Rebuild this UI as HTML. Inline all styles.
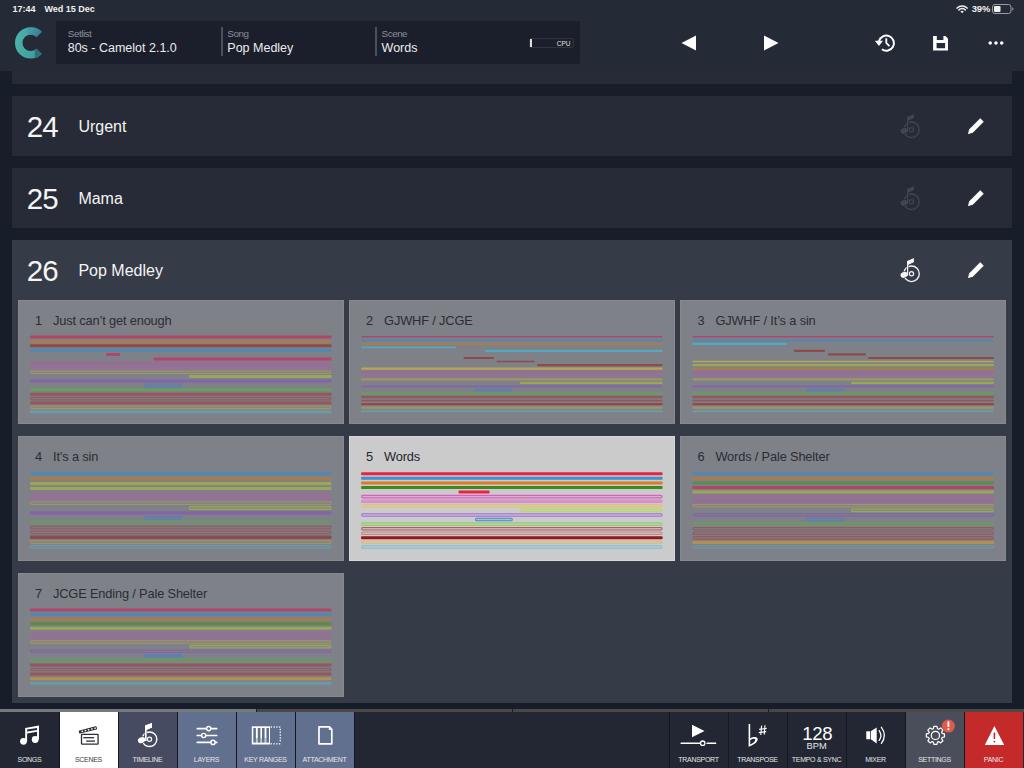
<!DOCTYPE html>
<html><head><meta charset="utf-8"><style>
html,body{margin:0;padding:0;}
body{width:1024px;height:768px;overflow:hidden;position:relative;background:#252a37;font-family:"Liberation Sans", sans-serif;}
.t{position:absolute;white-space:nowrap;}
.r{position:absolute;}
svg.r{overflow:visible;}
</style></head><body>
<div class="t" style="left:12.5px;top:4.68px;font-size:9px;line-height:9px;color:#f0f0f0;font-weight:bold;">17:44</div>
<div class="t" style="left:44.5px;top:4.68px;font-size:9px;line-height:9px;color:#f0f0f0;font-weight:bold;">Wed 15 Dec</div>
<div class="t" style="right:33.60000000000002px;text-align:right;top:4.34px;font-size:9.4px;line-height:9.4px;color:#f0f0f0;font-weight:600;">39%</div>
<svg class="r" style="left:10px;top:22px" width="40" height="40" viewBox="10 22 40 40">
<defs><linearGradient id="lg" x1="0" y1="0" x2="1" y2="0.3"><stop offset="0" stop-color="#4db2ad"/><stop offset="1" stop-color="#3f9d9d"/></linearGradient>
<linearGradient id="lg2" x1="0" y1="0" x2="1" y2="0.6"><stop offset="0" stop-color="#3d8fa0" stop-opacity="0"/><stop offset="1" stop-color="#3a7895"/></linearGradient></defs>
<path d="M41.8 31.8 A15.7 15.7 0 1 0 41.8 54.0 L36.5 48.7 A8.2 8.2 0 1 1 36.5 37.1 Z" fill="url(#lg)"/>
<path d="M41.8 31.8 A15.7 15.7 0 0 0 26 27.5 L28.5 35 A8.2 8.2 0 0 1 36.5 37.1 Z" fill="url(#lg2)"/>
<path d="M41.8 54.0 A15.7 15.7 0 0 1 34.7 58.2 L34.9 50.2 A8.2 8.2 0 0 0 36.5 48.7 Z" fill="#2f7272"/>
</svg>
<div class="r" style="left:56px;top:21px;width:524px;height:43.3px;background:#1b1f2c;border-radius:2px"></div>
<div class="t" style="left:67.8px;top:29.10px;font-size:9.8px;line-height:9.8px;color:#8a8e99;font-weight:normal;letter-spacing:-0.45px">Setlist</div>
<div class="t" style="left:67.7px;top:42.02px;font-size:12.5px;line-height:12.5px;color:#ececec;font-weight:normal;">80s - Camelot 2.1.0</div>
<div class="r" style="left:221px;top:27px;width:1.5px;height:28.5px;background:#4c505c;"></div>
<div class="t" style="left:227.3px;top:29.10px;font-size:9.8px;line-height:9.8px;color:#8a8e99;font-weight:normal;letter-spacing:-0.45px">Song</div>
<div class="t" style="left:227.3px;top:42.02px;font-size:12.5px;line-height:12.5px;color:#ececec;font-weight:normal;">Pop Medley</div>
<div class="r" style="left:375.2px;top:27px;width:1.5px;height:28.5px;background:#4c505c;"></div>
<div class="t" style="left:381.6px;top:29.10px;font-size:9.8px;line-height:9.8px;color:#8a8e99;font-weight:normal;letter-spacing:-0.45px">Scene</div>
<div class="t" style="left:381.6px;top:42.02px;font-size:12.5px;line-height:12.5px;color:#ececec;font-weight:normal;">Words</div>
<div class="r" style="left:529.4px;top:37.9px;width:44.5px;height:10px;background:transparent;box-sizing:border-box;border:1px solid #30343f;border-radius:2px"></div>
<div class="r" style="left:530.2px;top:38.9px;width:2px;height:8.1px;background:#dcdcdc;"></div>
<div class="t" style="right:453.5px;text-align:right;top:40.50px;font-size:6.5px;line-height:6.5px;color:#e0e0e0;font-weight:normal;">CPU</div>
<svg class="r" style="left:681px;top:35px" width="16" height="16" viewBox="0 0 16 16"><path d="M15 0.6 L15 15.4 L0.5 8 Z" fill="#fff"/></svg>
<svg class="r" style="left:763px;top:35px" width="16" height="16" viewBox="0 0 16 16"><path d="M1 0.6 L1 15.4 L15.5 8 Z" fill="#fff"/></svg>
<svg class="r" style="left:870px;top:28px" width="30" height="30" viewBox="870 28 30 30">
<path d="M879 41.1 A7.6 7.6 0 1 1 881.9 49.3" fill="none" stroke="#fff" stroke-width="2"/>
<path d="M874.9 40.8 L883 40.8 L878.95 45.9 Z" fill="#fff"/>
<path d="M886.3 38.3 L886.3 43 L889.4 46.1" fill="none" stroke="#fff" stroke-width="1.8"/>
</svg>
<svg class="r" style="left:930px;top:33px" width="20" height="20" viewBox="930 33 20 20">
<path d="M933.1 35.9 L936.8 35.9 L936.8 40 L943.4 40 L943.4 35.9 L945.4 35.9 L948 38.5 L948 50.4 L933.1 50.4 Z M936.6 43 L945.1 43 L945.1 48.3 L936.6 48.3 Z" fill="#fff" fill-rule="evenodd"/>
</svg>
<svg class="r" style="left:980px;top:32px" width="32" height="20" viewBox="980 32 32 20"><circle cx="990.2" cy="42.9" r="1.75" fill="#fff"/><circle cx="995.95" cy="42.9" r="1.75" fill="#fff"/><circle cx="1001.7" cy="42.9" r="1.75" fill="#fff"/></svg>
<svg class="r" style="left:954px;top:3px" width="16" height="12" viewBox="954 3 16 12">
<path d="M957.1 8.1 A7 7 0 0 1 967.1 8.1" fill="none" stroke="#f0f0f0" stroke-width="1.5" stroke-linecap="round"/>
<path d="M958.9 9.9 A4.5 4.5 0 0 1 965.3 9.9" fill="none" stroke="#f0f0f0" stroke-width="1.5" stroke-linecap="round"/>
<path d="M962.1 13.2 L960.4 11.5 A2.4 2.4 0 0 1 963.8 11.5 Z" fill="#f0f0f0"/>
</svg>
<svg class="r" style="left:992px;top:4px" width="22" height="10" viewBox="0 0 22 10">
<rect x="0.5" y="0.5" width="18.5" height="9" rx="2.5" fill="none" stroke="#9a9ca2" stroke-width="1"/>
<rect x="2" y="2" width="6.5" height="6" rx="1" fill="#f0f0f0"/>
<path d="M20.3 3.3 A1.8 1.8 0 0 1 20.3 6.7 Z" fill="#9a9ca2"/>
</svg>
<div class="r" style="left:0px;top:71px;width:1024px;height:641px;background:#181d2a;"></div>
<div class="r" style="left:12px;top:71px;width:1000px;height:13px;background:#262b37;"></div>
<div class="r" style="left:12px;top:96px;width:1000px;height:60px;background:#262b37;"></div>
<div class="t" style="left:26.8px;top:112.03px;font-size:29.5px;line-height:29.5px;color:#f4f4f4;font-weight:normal;letter-spacing:-1px">24</div>
<div class="t" style="left:78.4px;top:118.76px;font-size:16px;line-height:16px;color:#f4f4f4;font-weight:normal;">Urgent</div>
<div class="r" style="left:12px;top:168px;width:1000px;height:60px;background:#262b37;"></div>
<div class="t" style="left:26.8px;top:184.03px;font-size:29.5px;line-height:29.5px;color:#f4f4f4;font-weight:normal;letter-spacing:-1px">25</div>
<div class="t" style="left:78.4px;top:190.76px;font-size:16px;line-height:16px;color:#f4f4f4;font-weight:normal;">Mama</div>
<div class="r" style="left:12px;top:240px;width:1000px;height:463px;background:#363b48;"></div>
<div class="t" style="left:26.8px;top:256.03px;font-size:29.5px;line-height:29.5px;color:#f4f4f4;font-weight:normal;letter-spacing:-1px">26</div>
<div class="t" style="left:78.4px;top:262.76px;font-size:16px;line-height:16px;color:#f4f4f4;font-weight:normal;">Pop Medley</div>
<svg class="r" style="left:895px;top:111px" width="30" height="30" viewBox="895 15 30 30">
<circle cx="911.5" cy="33.8" r="7.8" fill="none" stroke="#40454f" stroke-width="1.3"/>
<circle cx="911.5" cy="33.8" r="2.1" fill="none" stroke="#40454f" stroke-width="1.2"/>
<path d="M907 35.5 L907 21.3 L913.8 18.2 L913.8 22 L908.1 24.8 L908.1 35.5 Z" fill="#40454f" stroke="#262b37" stroke-width="0.8" paint-order="stroke"/>
<ellipse cx="904.1" cy="34.8" rx="3.7" ry="2.8" transform="rotate(-25 904.1 34.8)" fill="#40454f" stroke="#262b37" stroke-width="1" paint-order="stroke"/>
<path d="M907 35.5 L907 21.3 L913.8 18.2 L913.8 22 L908.1 24.8 L908.1 35.5 Z" fill="#40454f"/>
</svg>
<svg class="r" style="left:960px;top:106px" width="30" height="30" viewBox="960 10 30 30">
<path d="M980.2 22.6 L983.4 25.8 L972.8 36.4 L968.3 37.7 L969.6 33.2 Z" fill="#fff" stroke="#fff" stroke-width="0.6" stroke-linejoin="round"/>
</svg>
<svg class="r" style="left:895px;top:183px" width="30" height="30" viewBox="895 15 30 30">
<circle cx="911.5" cy="33.8" r="7.8" fill="none" stroke="#40454f" stroke-width="1.3"/>
<circle cx="911.5" cy="33.8" r="2.1" fill="none" stroke="#40454f" stroke-width="1.2"/>
<path d="M907 35.5 L907 21.3 L913.8 18.2 L913.8 22 L908.1 24.8 L908.1 35.5 Z" fill="#40454f" stroke="#262b37" stroke-width="0.8" paint-order="stroke"/>
<ellipse cx="904.1" cy="34.8" rx="3.7" ry="2.8" transform="rotate(-25 904.1 34.8)" fill="#40454f" stroke="#262b37" stroke-width="1" paint-order="stroke"/>
<path d="M907 35.5 L907 21.3 L913.8 18.2 L913.8 22 L908.1 24.8 L908.1 35.5 Z" fill="#40454f"/>
</svg>
<svg class="r" style="left:960px;top:178px" width="30" height="30" viewBox="960 10 30 30">
<path d="M980.2 22.6 L983.4 25.8 L972.8 36.4 L968.3 37.7 L969.6 33.2 Z" fill="#fff" stroke="#fff" stroke-width="0.6" stroke-linejoin="round"/>
</svg>
<svg class="r" style="left:895px;top:255px" width="30" height="30" viewBox="895 15 30 30">
<circle cx="911.5" cy="33.8" r="7.8" fill="none" stroke="#f4f4f4" stroke-width="1.3"/>
<circle cx="911.5" cy="33.8" r="2.1" fill="none" stroke="#f4f4f4" stroke-width="1.2"/>
<path d="M907 35.5 L907 21.3 L913.8 18.2 L913.8 22 L908.1 24.8 L908.1 35.5 Z" fill="#f4f4f4" stroke="#363b48" stroke-width="0.8" paint-order="stroke"/>
<ellipse cx="904.1" cy="34.8" rx="3.7" ry="2.8" transform="rotate(-25 904.1 34.8)" fill="#f4f4f4" stroke="#363b48" stroke-width="1" paint-order="stroke"/>
<path d="M907 35.5 L907 21.3 L913.8 18.2 L913.8 22 L908.1 24.8 L908.1 35.5 Z" fill="#f4f4f4"/>
</svg>
<svg class="r" style="left:960px;top:250px" width="30" height="30" viewBox="960 10 30 30">
<path d="M980.2 22.6 L983.4 25.8 L972.8 36.4 L968.3 37.7 L969.6 33.2 Z" fill="#fff" stroke="#fff" stroke-width="0.6" stroke-linejoin="round"/>
</svg>
<div class="r" style="left:18px;top:299.9px;width:325.5px;height:124.6px;background:#7e8187;box-shadow:inset 0 0 0 1px rgba(255,255,255,0.07)"></div>
<div class="t" style="left:35px;top:314.96px;font-size:12.8px;line-height:12.8px;color:#2a2d36;font-weight:normal;">1</div>
<div class="t" style="left:53px;top:314.96px;font-size:12.8px;line-height:12.8px;color:#2a2d36;font-weight:normal;letter-spacing:-0.15px">Just can’t get enough</div>
<div class="r" style="left:349.1px;top:299.9px;width:325.5px;height:124.6px;background:#7e8187;box-shadow:inset 0 0 0 1px rgba(255,255,255,0.07)"></div>
<div class="t" style="left:366.1px;top:314.96px;font-size:12.8px;line-height:12.8px;color:#2a2d36;font-weight:normal;">2</div>
<div class="t" style="left:384.1px;top:314.96px;font-size:12.8px;line-height:12.8px;color:#2a2d36;font-weight:normal;letter-spacing:-0.15px">GJWHF / JCGE</div>
<div class="r" style="left:680.4px;top:299.9px;width:325.5px;height:124.6px;background:#7e8187;box-shadow:inset 0 0 0 1px rgba(255,255,255,0.07)"></div>
<div class="t" style="left:697.4px;top:314.96px;font-size:12.8px;line-height:12.8px;color:#2a2d36;font-weight:normal;">3</div>
<div class="t" style="left:715.4px;top:314.96px;font-size:12.8px;line-height:12.8px;color:#2a2d36;font-weight:normal;letter-spacing:-0.15px">GJWHF / It’s a sin</div>
<div class="r" style="left:18px;top:436px;width:325.5px;height:124.6px;background:#7e8187;box-shadow:inset 0 0 0 1px rgba(255,255,255,0.07)"></div>
<div class="t" style="left:35px;top:451.06px;font-size:12.8px;line-height:12.8px;color:#2a2d36;font-weight:normal;">4</div>
<div class="t" style="left:53px;top:451.06px;font-size:12.8px;line-height:12.8px;color:#2a2d36;font-weight:normal;letter-spacing:-0.15px">It’s a sin</div>
<div class="r" style="left:349.1px;top:436px;width:325.5px;height:124.6px;background:#cbcbcb;box-shadow:inset 0 0 0 1px rgba(255,255,255,0.25)"></div>
<div class="t" style="left:366.1px;top:451.06px;font-size:12.8px;line-height:12.8px;color:#22252e;font-weight:normal;">5</div>
<div class="t" style="left:384.1px;top:451.06px;font-size:12.8px;line-height:12.8px;color:#22252e;font-weight:normal;letter-spacing:-0.15px">Words</div>
<div class="r" style="left:680.4px;top:436px;width:325.5px;height:124.6px;background:#7e8187;box-shadow:inset 0 0 0 1px rgba(255,255,255,0.07)"></div>
<div class="t" style="left:697.4px;top:451.06px;font-size:12.8px;line-height:12.8px;color:#2a2d36;font-weight:normal;">6</div>
<div class="t" style="left:715.4px;top:451.06px;font-size:12.8px;line-height:12.8px;color:#2a2d36;font-weight:normal;letter-spacing:-0.15px">Words / Pale Shelter</div>
<div class="r" style="left:18px;top:572.6px;width:325.5px;height:124.6px;background:#7e8187;box-shadow:inset 0 0 0 1px rgba(255,255,255,0.07)"></div>
<div class="t" style="left:35px;top:587.66px;font-size:12.8px;line-height:12.8px;color:#2a2d36;font-weight:normal;">7</div>
<div class="t" style="left:53px;top:587.66px;font-size:12.8px;line-height:12.8px;color:#2a2d36;font-weight:normal;letter-spacing:-0.15px">JCGE Ending / Pale Shelter</div>
<svg class="r" style="left:0px;top:0px" width="1024" height="768" viewBox="0 0 1024 768"><rect x="30.00" y="335.50" width="301.50" height="3.00" rx="0.8" fill="#b0476a"/><rect x="30.00" y="339.90" width="301.50" height="3.00" rx="0.8" fill="#a97c50"/><rect x="30.00" y="344.30" width="301.50" height="3.00" rx="0.8" fill="#8e4b4b"/><rect x="30.00" y="348.70" width="301.50" height="3.00" rx="0.8" fill="#4f89b3"/><rect x="106.00" y="353.10" width="14.00" height="3.00" rx="0.8" fill="#b0476a"/><rect x="153.60" y="357.50" width="177.90" height="3.00" rx="0.8" fill="#b0476a"/><rect x="30.55" y="362.15" width="300.40" height="2.50" rx="1.1" fill="#9b6b97c0" stroke="#9b6b97" stroke-width="1.1"/><rect x="30.55" y="366.55" width="300.40" height="2.50" rx="1.1" fill="#a06a9e38" stroke="#a06a9e" stroke-width="1.1"/><rect x="30.55" y="370.95" width="300.40" height="2.50" rx="1.1" fill="#a0946838" stroke="#a09468" stroke-width="1.1"/><rect x="188.80" y="375.10" width="142.70" height="3.00" rx="0.8" fill="#98a856"/><rect x="30.00" y="379.50" width="301.50" height="3.00" rx="0.8" fill="#8563aa"/><rect x="144.55" y="384.15" width="36.90" height="2.50" rx="1.1" fill="#5b7fb338" stroke="#5b7fb3" stroke-width="1.1"/><rect x="30.00" y="388.30" width="301.50" height="3.00" rx="0.8" fill="#6a9b60"/><rect x="30.00" y="392.70" width="301.50" height="3.00" rx="0.8" fill="#94575f"/><rect x="30.55" y="397.35" width="300.40" height="2.50" rx="1.1" fill="#945a6238" stroke="#945a62" stroke-width="1.1"/><rect x="30.00" y="401.50" width="301.50" height="3.00" rx="0.8" fill="#94575f"/><rect x="30.55" y="406.15" width="300.40" height="2.50" rx="1.1" fill="#a0946838" stroke="#a09468" stroke-width="1.1"/><rect x="30.00" y="410.30" width="301.50" height="3.00" rx="0.8" fill="#6b9aa8"/><rect x="361.10" y="335.90" width="301.50" height="1.60" rx="0.8" fill="#b0476a"/><rect x="361.10" y="339.15" width="301.50" height="2.20" rx="0.8" fill="#4f89b3"/><rect x="361.10" y="342.70" width="301.50" height="2.20" rx="0.8" fill="#a97c50"/><rect x="361.10" y="346.55" width="94.90" height="1.60" rx="0.8" fill="#55a9ba"/><rect x="485.00" y="349.80" width="177.60" height="2.20" rx="0.8" fill="#55a9ba"/><rect x="463.40" y="356.90" width="30.60" height="2.20" rx="0.8" fill="#8e4b4b"/><rect x="496.50" y="360.75" width="38.20" height="1.60" rx="0.8" fill="#8e4b4b"/><rect x="537.00" y="364.00" width="125.60" height="2.20" rx="0.8" fill="#8e4b4b"/><rect x="361.10" y="367.55" width="301.50" height="2.20" rx="0.8" fill="#b6a756"/><rect x="361.10" y="370.90" width="301.50" height="2.60" rx="0.8" fill="#9b6b97"/><rect x="361.10" y="374.95" width="301.50" height="1.60" rx="0.8" fill="#a06a9e"/><rect x="361.10" y="378.20" width="301.50" height="2.20" rx="0.8" fill="#a09468"/><rect x="520.00" y="381.75" width="142.60" height="2.20" rx="0.8" fill="#98a856"/><rect x="361.10" y="385.60" width="301.50" height="1.60" rx="0.8" fill="#8563aa"/><rect x="475.55" y="389.10" width="36.90" height="1.70" rx="1.1" fill="#5b7fb338" stroke="#5b7fb3" stroke-width="1.1"/><rect x="361.10" y="392.20" width="301.50" height="2.60" rx="0.8" fill="#6a9b60"/><rect x="361.10" y="395.75" width="301.50" height="2.60" rx="0.8" fill="#94575f"/><rect x="361.10" y="399.80" width="301.50" height="1.60" rx="0.8" fill="#94575f"/><rect x="361.10" y="403.05" width="301.50" height="2.20" rx="0.8" fill="#8e4b4b"/><rect x="361.10" y="406.60" width="301.50" height="2.20" rx="0.8" fill="#a09468"/><rect x="361.10" y="410.15" width="301.50" height="2.20" rx="0.8" fill="#6b9aa8"/><rect x="692.40" y="335.90" width="301.50" height="1.60" rx="0.8" fill="#b0476a"/><rect x="692.40" y="339.15" width="301.50" height="2.20" rx="0.8" fill="#4f89b3"/><rect x="692.40" y="342.70" width="94.90" height="2.20" rx="0.8" fill="#55a9ba"/><rect x="794.00" y="349.80" width="31.00" height="2.20" rx="0.8" fill="#8e4b4b"/><rect x="828.00" y="353.35" width="38.00" height="2.20" rx="0.8" fill="#8e4b4b"/><rect x="868.00" y="356.90" width="125.90" height="2.20" rx="0.8" fill="#8e4b4b"/><rect x="692.40" y="360.75" width="301.50" height="1.60" rx="0.8" fill="#b6a756"/><rect x="692.40" y="364.00" width="301.50" height="2.20" rx="0.8" fill="#98a856"/><rect x="692.40" y="367.55" width="301.50" height="2.20" rx="0.8" fill="#a97c50"/><rect x="692.40" y="370.90" width="301.50" height="2.60" rx="0.8" fill="#9b6b97"/><rect x="692.40" y="374.65" width="301.50" height="2.20" rx="0.8" fill="#a06a9e"/><rect x="692.40" y="378.20" width="301.50" height="2.20" rx="0.8" fill="#a09468"/><rect x="851.00" y="381.75" width="142.90" height="2.20" rx="0.8" fill="#98a856"/><rect x="692.40" y="385.60" width="301.50" height="1.60" rx="0.8" fill="#8563aa"/><rect x="806.55" y="389.10" width="37.40" height="1.70" rx="1.1" fill="#5b7fb338" stroke="#5b7fb3" stroke-width="1.1"/><rect x="692.40" y="392.20" width="301.50" height="2.60" rx="0.8" fill="#6a9b60"/><rect x="692.40" y="395.75" width="301.50" height="2.60" rx="0.8" fill="#94575f"/><rect x="692.40" y="399.80" width="301.50" height="1.60" rx="0.8" fill="#94575f"/><rect x="692.40" y="403.05" width="301.50" height="2.20" rx="0.8" fill="#8e4b4b"/><rect x="692.40" y="406.60" width="301.50" height="2.20" rx="0.8" fill="#a09468"/><rect x="692.40" y="410.15" width="301.50" height="2.20" rx="0.8" fill="#6b9aa8"/><rect x="30.00" y="472.30" width="301.50" height="3.20" rx="0.8" fill="#4f89b3"/><rect x="30.00" y="477.07" width="301.50" height="3.40" rx="0.8" fill="#a97c50"/><rect x="30.00" y="482.04" width="301.50" height="3.20" rx="0.8" fill="#98a856"/><rect x="30.00" y="486.91" width="301.50" height="3.20" rx="0.8" fill="#98a856"/><rect x="30.55" y="492.03" width="300.40" height="2.70" rx="1.1" fill="#a06a9e38" stroke="#a06a9e" stroke-width="1.1"/><rect x="30.55" y="496.90" width="300.40" height="2.70" rx="1.1" fill="#a06a9e38" stroke="#a06a9e" stroke-width="1.1"/><rect x="30.55" y="501.77" width="300.40" height="2.70" rx="1.1" fill="#a0946838" stroke="#a09468" stroke-width="1.1"/><rect x="189.35" y="506.64" width="141.60" height="2.70" rx="1.1" fill="#98a85638" stroke="#98a856" stroke-width="1.1"/><rect x="30.00" y="511.26" width="301.50" height="3.20" rx="0.8" fill="#8563aa"/><rect x="144.75" y="516.38" width="36.70" height="2.70" rx="1.1" fill="#5b7fb338" stroke="#5b7fb3" stroke-width="1.1"/><rect x="30.55" y="521.25" width="300.40" height="2.70" rx="1.1" fill="#6a9b6038" stroke="#6a9b60" stroke-width="1.1"/><rect x="30.55" y="526.12" width="300.40" height="2.70" rx="1.1" fill="#945a6238" stroke="#945a62" stroke-width="1.1"/><rect x="30.55" y="530.99" width="300.40" height="2.70" rx="1.1" fill="#945a6238" stroke="#945a62" stroke-width="1.1"/><rect x="30.00" y="535.51" width="301.50" height="3.40" rx="0.8" fill="#8e4b4b"/><rect x="30.55" y="540.73" width="300.40" height="2.70" rx="1.1" fill="#a0946838" stroke="#a09468" stroke-width="1.1"/><rect x="30.55" y="545.60" width="300.40" height="2.70" rx="1.1" fill="#6b9aa838" stroke="#6b9aa8" stroke-width="1.1"/><rect x="361.10" y="472.25" width="301.50" height="3.00" rx="0.8" fill="#e9243f"/><rect x="361.10" y="476.83" width="301.50" height="3.00" rx="0.8" fill="#3e90d2"/><rect x="361.10" y="481.41" width="301.50" height="3.00" rx="0.8" fill="#e07a25"/><rect x="361.10" y="485.89" width="301.50" height="3.20" rx="0.8" fill="#3c8b22"/><rect x="458.60" y="490.57" width="30.90" height="3.00" rx="0.8" fill="#e9243f"/><rect x="361.65" y="495.40" width="300.40" height="2.50" rx="1.1" fill="#dd5dc230" stroke="#dd5dc2" stroke-width="1.1"/><rect x="361.65" y="499.98" width="300.40" height="2.50" rx="1.1" fill="#d98ac6d0" stroke="#d98ac6" stroke-width="1.1"/><rect x="361.65" y="504.56" width="300.40" height="2.50" rx="1.1" fill="#e2c56a30" stroke="#e2c56a" stroke-width="1.1"/><rect x="520.75" y="509.14" width="141.30" height="2.50" rx="1.1" fill="#bcd96630" stroke="#bcd966" stroke-width="1.1"/><rect x="361.65" y="513.72" width="300.40" height="2.50" rx="1.1" fill="#a56fdd30" stroke="#a56fdd" stroke-width="1.1"/><rect x="475.55" y="518.30" width="36.70" height="2.50" rx="1.1" fill="#4a86d030" stroke="#4a86d0" stroke-width="1.1"/><rect x="361.65" y="522.88" width="300.40" height="2.50" rx="1.1" fill="#90d17230" stroke="#90d172" stroke-width="1.1"/><rect x="361.65" y="527.46" width="300.40" height="2.50" rx="1.1" fill="#b65a5a30" stroke="#b65a5a" stroke-width="1.1"/><rect x="361.65" y="532.04" width="300.40" height="2.50" rx="1.1" fill="#c9858530" stroke="#c98585" stroke-width="1.1"/><rect x="361.10" y="536.37" width="301.50" height="3.00" rx="0.8" fill="#911a1a"/><rect x="361.65" y="541.20" width="300.40" height="2.50" rx="1.1" fill="#dfb77430" stroke="#dfb774" stroke-width="1.1"/><rect x="361.65" y="545.78" width="300.40" height="2.50" rx="1.1" fill="#74c3dc30" stroke="#74c3dc" stroke-width="1.1"/><rect x="692.40" y="472.25" width="301.50" height="3.00" rx="0.8" fill="#4f89b3"/><rect x="692.40" y="476.83" width="301.50" height="3.00" rx="0.8" fill="#a97c50"/><rect x="692.40" y="481.41" width="301.50" height="3.00" rx="0.8" fill="#5e8a4e"/><rect x="692.40" y="485.99" width="301.50" height="3.00" rx="0.8" fill="#b0476a"/><rect x="692.40" y="490.57" width="301.50" height="3.00" rx="0.8" fill="#98a856"/><rect x="692.95" y="495.40" width="300.40" height="2.50" rx="1.1" fill="#a06a9e38" stroke="#a06a9e" stroke-width="1.1"/><rect x="692.95" y="499.98" width="300.40" height="2.50" rx="1.1" fill="#9b6b97c0" stroke="#9b6b97" stroke-width="1.1"/><rect x="692.95" y="504.56" width="300.40" height="2.50" rx="1.1" fill="#a0946838" stroke="#a09468" stroke-width="1.1"/><rect x="851.55" y="509.14" width="141.80" height="2.50" rx="1.1" fill="#98a85638" stroke="#98a856" stroke-width="1.1"/><rect x="692.95" y="513.72" width="300.40" height="2.50" rx="1.1" fill="#8563aa38" stroke="#8563aa" stroke-width="1.1"/><rect x="806.80" y="518.30" width="37.05" height="2.50" rx="1.1" fill="#5b7fb338" stroke="#5b7fb3" stroke-width="1.1"/><rect x="692.95" y="522.88" width="300.40" height="2.50" rx="1.1" fill="#6a9b6038" stroke="#6a9b60" stroke-width="1.1"/><rect x="692.95" y="527.46" width="300.40" height="2.50" rx="1.1" fill="#945a6238" stroke="#945a62" stroke-width="1.1"/><rect x="692.95" y="532.04" width="300.40" height="2.50" rx="1.1" fill="#945a6238" stroke="#945a62" stroke-width="1.1"/><rect x="692.95" y="536.62" width="300.40" height="2.50" rx="1.1" fill="#945a6238" stroke="#945a62" stroke-width="1.1"/><rect x="692.40" y="540.95" width="301.50" height="3.00" rx="0.8" fill="#b39050"/><rect x="692.95" y="545.78" width="300.40" height="2.50" rx="1.1" fill="#6b9aa838" stroke="#6b9aa8" stroke-width="1.1"/><rect x="30.00" y="608.50" width="301.50" height="3.00" rx="0.8" fill="#b0476a"/><rect x="30.00" y="613.08" width="301.50" height="3.00" rx="0.8" fill="#4f89b3"/><rect x="30.00" y="617.66" width="301.50" height="3.00" rx="0.8" fill="#a97c50"/><rect x="30.00" y="622.24" width="301.50" height="3.00" rx="0.8" fill="#5e8a4e"/><rect x="30.00" y="626.82" width="301.50" height="3.00" rx="0.8" fill="#98a856"/><rect x="30.55" y="631.65" width="300.40" height="2.50" rx="1.1" fill="#a06a9e38" stroke="#a06a9e" stroke-width="1.1"/><rect x="30.55" y="636.23" width="300.40" height="2.50" rx="1.1" fill="#a06a9e38" stroke="#a06a9e" stroke-width="1.1"/><rect x="30.55" y="640.81" width="300.40" height="2.50" rx="1.1" fill="#a0946838" stroke="#a09468" stroke-width="1.1"/><rect x="189.85" y="645.39" width="141.10" height="2.50" rx="1.1" fill="#98a85638" stroke="#98a856" stroke-width="1.1"/><rect x="30.55" y="649.97" width="300.40" height="2.50" rx="1.1" fill="#8563aa38" stroke="#8563aa" stroke-width="1.1"/><rect x="144.20" y="654.30" width="37.80" height="3.00" rx="0.8" fill="#5b7fb3"/><rect x="30.55" y="659.13" width="300.40" height="2.50" rx="1.1" fill="#6a9b6038" stroke="#6a9b60" stroke-width="1.1"/><rect x="30.00" y="663.46" width="301.50" height="3.00" rx="0.8" fill="#94575f"/><rect x="30.55" y="668.29" width="300.40" height="2.50" rx="1.1" fill="#945a6238" stroke="#945a62" stroke-width="1.1"/><rect x="30.00" y="672.62" width="301.50" height="3.00" rx="0.8" fill="#94575f"/><rect x="30.00" y="677.20" width="301.50" height="3.00" rx="0.8" fill="#b39050"/><rect x="30.00" y="681.78" width="301.50" height="3.00" rx="0.8" fill="#6b9aa8"/></svg>
<div class="r" style="left:0px;top:709px;width:256px;height:3px;background:#77797e;"></div>
<div class="r" style="left:257px;top:709px;width:255px;height:3px;background:#49494a;"></div>
<div class="r" style="left:513px;top:709px;width:255px;height:3px;background:#49494a;"></div>
<div class="r" style="left:769px;top:709px;width:255px;height:3px;background:#49494a;"></div>
<div class="r" style="left:0px;top:712px;width:1024px;height:56px;background:#222733;"></div>
<div class="r" style="left:0px;top:712px;width:59px;height:56px;background:#222733;"></div>
<div class="t" style="left:-70.5px;width:200px;text-align:center;top:755.97px;font-size:7px;line-height:7px;color:#e6e6e6;font-weight:normal;letter-spacing:-0.3px">SONGS</div>
<div class="r" style="left:59px;top:712px;width:59px;height:56px;background:#ffffff;"></div>
<div class="r" style="left:58.5px;top:712px;width:1px;height:56px;background:#151820;"></div>
<div class="t" style="left:-11.5px;width:200px;text-align:center;top:755.97px;font-size:7px;line-height:7px;color:#3a3d45;font-weight:normal;letter-spacing:-0.3px">SCENES</div>
<div class="r" style="left:118px;top:712px;width:59px;height:56px;background:#464b61;"></div>
<div class="r" style="left:117.5px;top:712px;width:1px;height:56px;background:#151820;"></div>
<div class="t" style="left:47.5px;width:200px;text-align:center;top:755.97px;font-size:7px;line-height:7px;color:#e6e6e6;font-weight:normal;letter-spacing:-0.3px">TIMELINE</div>
<div class="r" style="left:177px;top:712px;width:59px;height:56px;background:#62708f;"></div>
<div class="r" style="left:176.5px;top:712px;width:1px;height:56px;background:#151820;"></div>
<div class="t" style="left:106.5px;width:200px;text-align:center;top:755.97px;font-size:7px;line-height:7px;color:#e6e6e6;font-weight:normal;letter-spacing:-0.3px">LAYERS</div>
<div class="r" style="left:236px;top:712px;width:59px;height:56px;background:#62708f;"></div>
<div class="r" style="left:235.5px;top:712px;width:1px;height:56px;background:#151820;"></div>
<div class="t" style="left:165.5px;width:200px;text-align:center;top:755.97px;font-size:7px;line-height:7px;color:#e6e6e6;font-weight:normal;letter-spacing:-0.3px">KEY RANGES</div>
<div class="r" style="left:295px;top:712px;width:59px;height:56px;background:#62708f;"></div>
<div class="r" style="left:294.5px;top:712px;width:1px;height:56px;background:#151820;"></div>
<div class="t" style="left:224.5px;width:200px;text-align:center;top:755.97px;font-size:7px;line-height:7px;color:#e6e6e6;font-weight:normal;letter-spacing:-0.3px">ATTACHMENT</div>
<div class="r" style="left:354px;top:712px;width:1px;height:56px;background:#151820;"></div>
<div class="r" style="left:669px;top:712px;width:59px;height:56px;background:#222733;"></div>
<div class="r" style="left:668.5px;top:712px;width:1px;height:56px;background:#151820;"></div>
<div class="t" style="left:598.5px;width:200px;text-align:center;top:755.97px;font-size:7px;line-height:7px;color:#e6e6e6;font-weight:normal;letter-spacing:-0.3px">TRANSPORT</div>
<div class="r" style="left:728px;top:712px;width:59px;height:56px;background:#222733;"></div>
<div class="r" style="left:727.5px;top:712px;width:1px;height:56px;background:#151820;"></div>
<div class="t" style="left:657.5px;width:200px;text-align:center;top:755.97px;font-size:7px;line-height:7px;color:#e6e6e6;font-weight:normal;letter-spacing:-0.3px">TRANSPOSE</div>
<div class="r" style="left:787px;top:712px;width:59px;height:56px;background:#222733;"></div>
<div class="r" style="left:786.5px;top:712px;width:1px;height:56px;background:#151820;"></div>
<div class="t" style="left:716.5px;width:200px;text-align:center;top:755.97px;font-size:7px;line-height:7px;color:#e6e6e6;font-weight:normal;letter-spacing:-0.3px">TEMPO &amp; SYNC</div>
<div class="r" style="left:846px;top:712px;width:59px;height:56px;background:#222733;"></div>
<div class="r" style="left:845.5px;top:712px;width:1px;height:56px;background:#151820;"></div>
<div class="t" style="left:775.5px;width:200px;text-align:center;top:755.97px;font-size:7px;line-height:7px;color:#e6e6e6;font-weight:normal;letter-spacing:-0.3px">MIXER</div>
<div class="r" style="left:905px;top:712px;width:59px;height:56px;background:#494e5a;"></div>
<div class="r" style="left:904.5px;top:712px;width:1px;height:56px;background:#151820;"></div>
<div class="t" style="left:834.5px;width:200px;text-align:center;top:755.97px;font-size:7px;line-height:7px;color:#e6e6e6;font-weight:normal;letter-spacing:-0.3px">SETTINGS</div>
<div class="r" style="left:964px;top:712px;width:59px;height:56px;background:#c42a2a;"></div>
<div class="r" style="left:963.5px;top:712px;width:1px;height:56px;background:#151820;"></div>
<div class="t" style="left:893.5px;width:200px;text-align:center;top:755.97px;font-size:7px;line-height:7px;color:#e6e6e6;font-weight:normal;letter-spacing:-0.3px">PANIC</div>
<svg class="r" style="left:0px;top:712px" width="1024" height="56" viewBox="0 712 1024 56"><g fill="#ffffff">
<circle cx="23.5" cy="741.3" r="3.4"/><circle cx="35.2" cy="739.5" r="3.4"/>
<path d="M25.2 741.3 L25.2 727.9 L39 725.6 L39 739.5 L37 739.5 L37 731.7 L27.1 733.5 L27.1 741.3 Z M27.1 729.6 L27.1 731.6 L37 729.9 L37 727.9 Z" fill-rule="evenodd"/>
</g><g fill="none" stroke="#2c2f38" stroke-width="1.3">
<rect x="81.5" y="734.4" width="16.6" height="9.7" rx="0.6"/>
<line x1="83.3" y1="737.7" x2="94" y2="737.7"/><line x1="86.2" y1="741.1" x2="95" y2="741.1"/>
</g>
<g transform="rotate(-14 87.9 729.95)"><rect x="78.7" y="728.3" width="18.4" height="3.3" rx="0.8" fill="#2c2f38"/>
<g fill="#ffffff"><rect x="81.3" y="729.25" width="1.5" height="1.4"/><rect x="84.6" y="729.25" width="1.5" height="1.4"/><rect x="87.9" y="729.25" width="1.5" height="1.4"/><rect x="91.2" y="729.25" width="1.5" height="1.4"/><rect x="94.5" y="729.25" width="1.5" height="1.4"/></g></g><g>
<circle cx="149.5" cy="739.25" r="7.3" fill="none" stroke="#ffffff" stroke-width="1.4"/>
<circle cx="149.5" cy="739.25" r="2.1" fill="none" stroke="#ffffff" stroke-width="1.2"/>
<path d="M145.1 741 L145.1 725.5 L152 723 L152 727.4 L146.4 730 L146.4 741 Z" fill="#ffffff" stroke="#464b61" stroke-width="1.2" paint-order="stroke"/>
<ellipse cx="141.6" cy="740.1" rx="3.8" ry="2.8" transform="rotate(-25 141.6 740.1)" fill="#ffffff" stroke="#464b61" stroke-width="1.2" paint-order="stroke"/>
<path d="M145.1 741 L145.1 725.5 L152 723 L152 727.4 L146.4 730 L146.4 741 Z" fill="#ffffff"/>
</g><g stroke="#ffffff" stroke-width="1.7" stroke-linecap="round">
<line x1="197.3" y1="728.6" x2="216.7" y2="728.6"/><line x1="197.3" y1="735.5" x2="216.7" y2="735.5"/><line x1="197.3" y1="742.4" x2="216.7" y2="742.4"/>
</g><g fill="#62708f" stroke="#ffffff" stroke-width="1.4">
<circle cx="208.7" cy="728.6" r="2.1"/><circle cx="203.7" cy="735.5" r="2.1"/><circle cx="213" cy="742.4" r="2.1"/>
</g><rect x="251.8" y="726.3" width="18.2" height="18.2" fill="#ffffff"/>
<g fill="#c4c9d4"><rect x="256" y="738" width="2" height="4.6"/><rect x="260.4" y="738" width="2" height="4.6"/><rect x="264.6" y="738" width="2" height="4.6"/></g>
<g fill="#62708f"><rect x="253.3" y="728" width="2.6" height="14.6"/><rect x="257.8" y="728" width="2.6" height="14.6"/><rect x="262" y="728" width="2.6" height="14.6"/><rect x="266.4" y="728" width="2.6" height="14.6"/></g>
<g fill="#ffffff" opacity="0.9"><rect x="270.6" y="726.3" width="1.4" height="1.4"/><rect x="270.6" y="743.1" width="1.4" height="1.4"/><rect x="273.40000000000003" y="726.3" width="1.4" height="1.4"/><rect x="273.40000000000003" y="743.1" width="1.4" height="1.4"/><rect x="276.2" y="726.3" width="1.4" height="1.4"/><rect x="276.2" y="743.1" width="1.4" height="1.4"/><rect x="278.90000000000003" y="726.3" width="1.4" height="1.4"/><rect x="278.90000000000003" y="743.1" width="1.4" height="1.4"/><rect x="279.6" y="728.8" width="1.4" height="1.4"/><rect x="279.6" y="731.5999999999999" width="1.4" height="1.4"/><rect x="279.6" y="734.4" width="1.4" height="1.4"/><rect x="279.6" y="737.1999999999999" width="1.4" height="1.4"/><rect x="279.6" y="739.9" width="1.4" height="1.4"/></g><path d="M319 726.8 L329.4 726.8 L331.8 729.4 L331.8 743.8 L319 743.8 Z" fill="none" stroke="#ffffff" stroke-width="1.7" stroke-linejoin="round"/>
<path d="M328.8 726.3 L332.4 730 L328.8 730 Z" fill="#ffffff"/><path d="M692 724.7 L692 737.2 L704.5 730.9 Z" fill="#ffffff"/>
<line x1="681.2" y1="743.2" x2="699.8" y2="743.2" stroke="#ffffff" stroke-width="1.6" stroke-linecap="round"/>
<line x1="707.1" y1="743.2" x2="715.6" y2="743.2" stroke="#ffffff" stroke-width="1.6" stroke-linecap="round"/>
<circle cx="702.7" cy="743.2" r="2.2" fill="none" stroke="#ffffff" stroke-width="1.3"/><path d="M748.6 724 L750.2 724 L750.2 738.5 C752 736.8 754.5 736.6 756.3 737.3 C758.6 738.4 757.8 741.3 755.6 743 C753.8 744.5 751.5 745.7 748.6 746.8 Z M750.2 740.2 L750.2 744.6 C752 743.6 754 742.4 754.9 741 C755.6 739.8 755.3 738.9 754.2 738.7 C752.9 738.6 751.4 739.1 750.2 740.2 Z" fill="#ffffff" fill-rule="evenodd"/>
<g stroke="#ffffff" stroke-width="1.1"><line x1="761.6" y1="725.6" x2="760.8" y2="735"/><line x1="765" y1="725.2" x2="764.2" y2="734.6"/><line x1="759.2" y1="729.4" x2="766.6" y2="728.4"/><line x1="758.8" y1="732.6" x2="766.2" y2="731.6"/></g><rect x="866.25" y="731.3" width="3.8" height="7.95" fill="#ffffff"/>
<path d="M870.8 731.3 L876.7 727.4 L876.7 743.4 L870.8 739.25 Z" fill="#ffffff"/>
<path d="M879.2 730.6 Q882.6 735.5 879.2 740.4" fill="none" stroke="#ffffff" stroke-width="1.3" stroke-linecap="round"/>
<path d="M881.4 727.3 Q887.4 735.3 881.4 743.3" fill="none" stroke="#ffffff" stroke-width="1.3" stroke-linecap="round"/><path d="M942.09 733.33 L944.47 733.84 L944.47 736.96 L942.09 737.47 L941.59 738.67 L942.91 740.71 L940.71 742.91 L938.67 741.59 L937.47 742.09 L936.96 744.47 L933.84 744.47 L933.33 742.09 L932.13 741.59 L930.09 742.91 L927.89 740.71 L929.21 738.67 L928.71 737.47 L926.33 736.96 L926.33 733.84 L928.71 733.33 L929.21 732.13 L927.89 730.09 L930.09 727.89 L932.13 729.21 L933.33 728.71 L933.84 726.33 L936.96 726.33 L937.47 728.71 L938.67 729.21 L940.71 727.89 L942.91 730.09 L941.59 732.13 Z" fill="none" stroke="#ffffff" stroke-width="1.2" stroke-linejoin="round"/>
<circle cx="935.4" cy="735.4" r="4.1" fill="none" stroke="#ffffff" stroke-width="1.2"/>
<circle cx="948.4" cy="726.1" r="6.5" fill="#e05a4b"/>
<rect x="947.5" y="721.4" width="1.8" height="5.6" fill="#ffffff"/><rect x="947.5" y="728.3" width="1.8" height="1.8" fill="#ffffff"/><path d="M994.4 726.1 L1004.2 744.9 L984.8 744.9 Z" fill="#ffffff"/>
<rect x="993.6" y="732.6" width="1.6" height="6.3" rx="0.6" fill="#c42a2a"/><circle cx="994.4" cy="741.6" r="0.95" fill="#c42a2a"/></svg>
<div class="t" style="left:717.2px;width:200px;text-align:center;top:724.86px;font-size:18.6px;line-height:18.6px;color:#ffffff;font-weight:normal;letter-spacing:-0.3px">128</div>
<div class="t" style="left:716.6px;width:200px;text-align:center;top:741.83px;font-size:9.3px;line-height:9.3px;color:#e6e6e6;font-weight:normal;">BPM</div>
</body></html>
